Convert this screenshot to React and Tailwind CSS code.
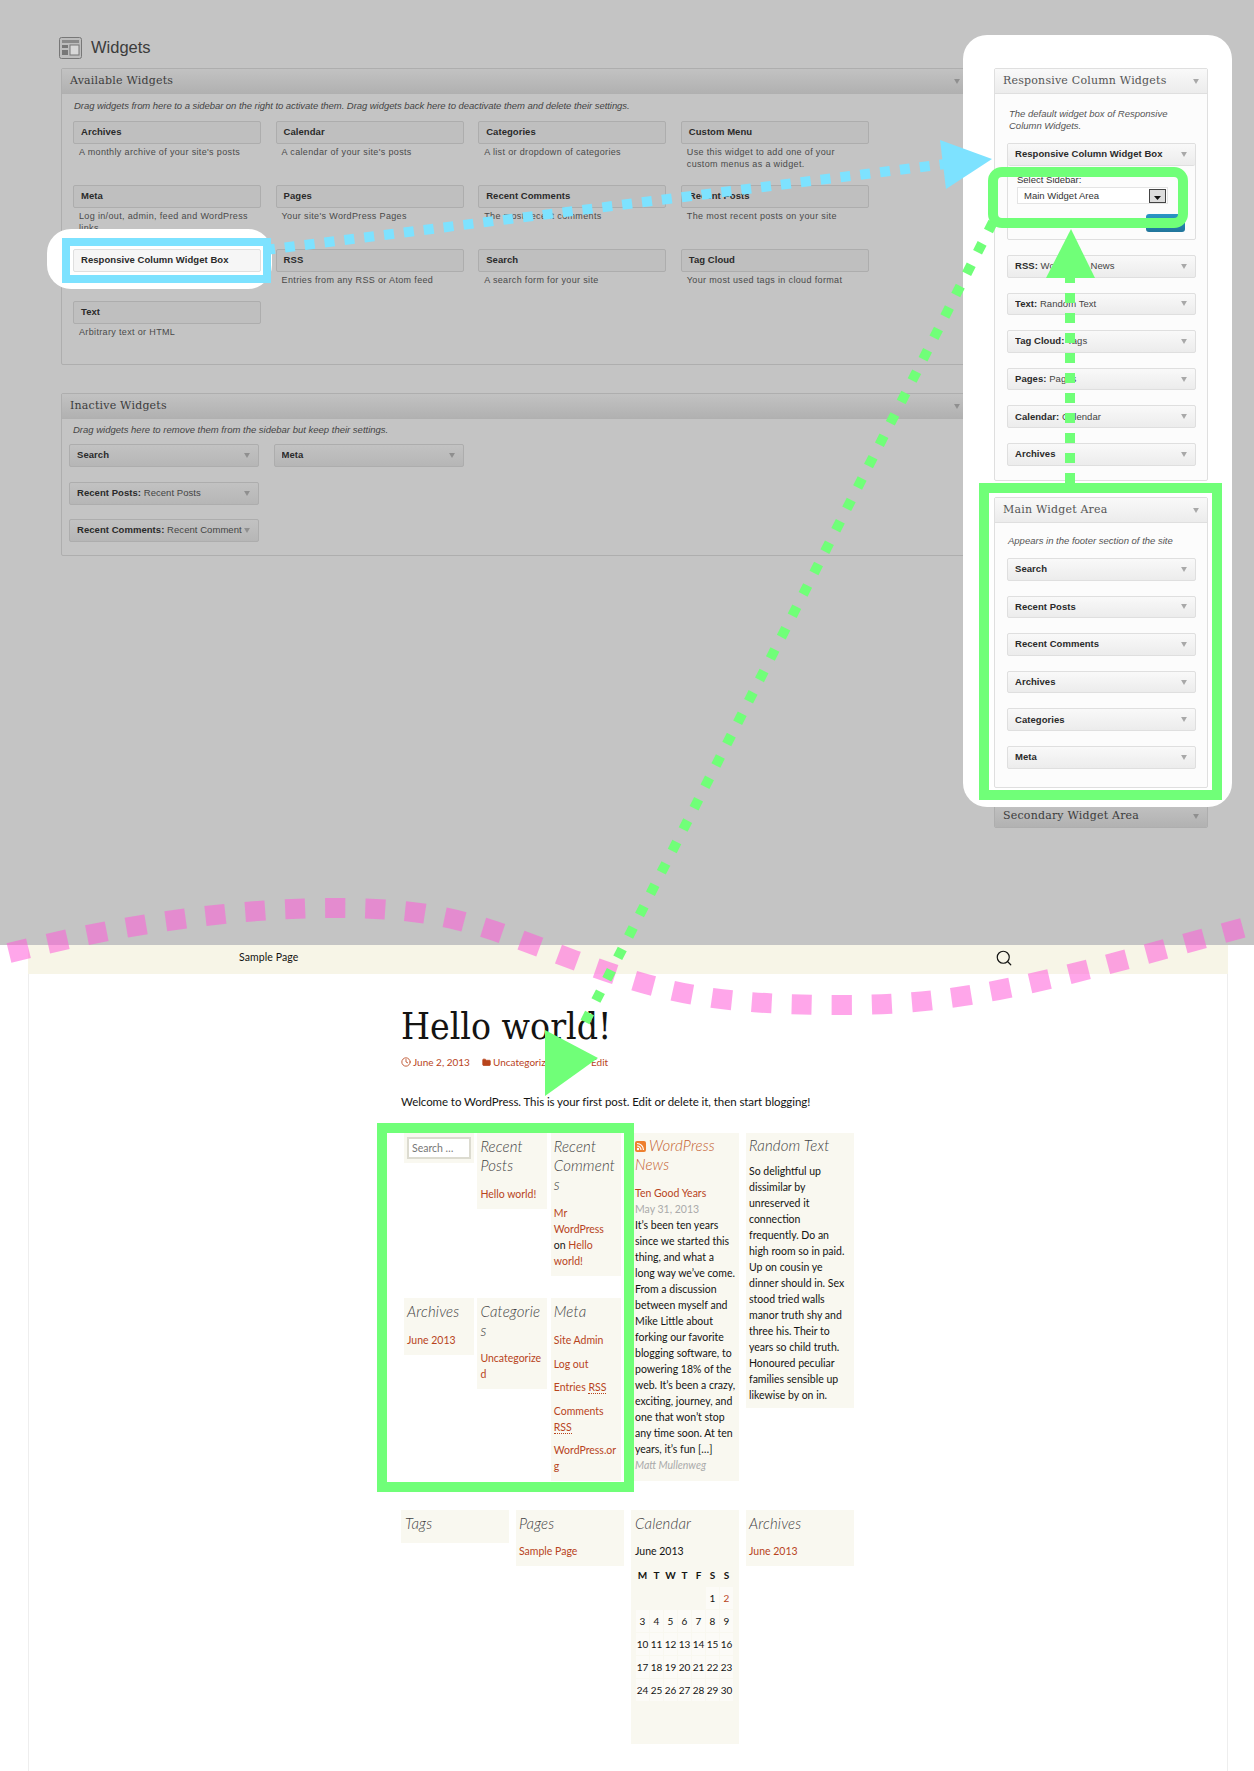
import React from 'react';
import { Clock, Folder, Search } from 'lucide-react';

const sans = "font-['Liberation_Sans',Arial,sans-serif]";
const serif = "font-['DejaVu_Serif',Georgia,serif]";
const blog = "font-['Lato','Noto_Sans',sans-serif]";

const available = [
    ['Archives', "A monthly archive of your site's posts"],
    ['Calendar', "A calendar of your site's posts"],
    ['Categories', 'A list or dropdown of categories'],
    ['Custom Menu', 'Use this widget to add one of your custom menus as a widget.'],
    ['Meta', 'Log in/out, admin, feed and WordPress links'],
    ['Pages', "Your site's WordPress Pages"],
    ['Recent Comments', 'The most recent comments'],
    ['Recent Posts', 'The most recent posts on your site'],
    ['Responsive Column Widget Box', ''],
    ['RSS', 'Entries from any RSS or Atom feed'],
    ['Search', 'A search form for your site'],
    ['Tag Cloud', 'Your most used tags in cloud format'],
    ['Text', 'Arbitrary text or HTML'],
];

const newsLines = [
    'It’s been ten years', 'since we started this', 'thing, and what a', 'long way we’ve come.',
    'From a discussion', 'between myself and', 'Mike Little about', 'forking our favorite',
    'blogging software, to', 'powering 18% of the', 'web. It’s been a crazy,', 'exciting, journey, and',
    'one that won’t stop', 'any time soon. At ten', 'years, it’s fun […]',
];

const randomLines = [
    'So delightful up', 'dissimilar by', 'unreserved it', 'connection', 'frequently. Do an',
    'high room so in paid.', 'Up on cousin ye', 'dinner should in. Sex', 'stood tried walls',
    'manor truth shy and', 'three his. Their to', 'years so child truth.', 'Honoured peculiar',
    'families sensible up', 'likewise by on in.',
];

const calendar = [
    ['', '', '', '', '', '1', '2'],
    ['3', '4', '5', '6', '7', '8', '9'],
    ['10', '11', '12', '13', '14', '15', '16'],
    ['17', '18', '19', '20', '21', '22', '23'],
    ['24', '25', '26', '27', '28', '29', '30'],
];

const Caret = ({ dim }) => (
    <svg width="6" height="5" viewBox="0 0 7 6" className="shrink-0">
        <path d="M0 0h7L3.5 6z" fill={dim ? '#8f8f8f' : '#a8a8a8'} />
    </svg>
);

const PanelHead = ({ title, dim }) => (
    <div className={`h-[25px] flex items-center justify-between pl-[8px] pr-[8px] border-b ${dim
        ? 'bg-gradient-to-b from-[#c2c2c2] to-[#b1b1b1] border-[#b0b0b0]'
        : 'bg-gradient-to-b from-[#f9f9f9] to-[#ececec] border-[#dfdfdf]'}`}>
        <span className={`${serif} text-[11px] tracking-[0.2px] ${dim ? 'text-[#3c3c3c]' : 'text-[#555]'}`}>{title}</span>
        <Caret dim={dim} />
    </div>
);

const Row = ({ name, sub, dim, className = '' }) => (
    <div className={`flex items-center justify-between pl-[7px] pr-[8px] border rounded-[2px] ${sans} text-[9.5px] tracking-[0.05px] ${dim
        ? 'bg-gradient-to-b from-[#c2c2c2] to-[#b6b6b6] border-[#adadad]'
        : 'bg-gradient-to-b from-[#f9f9f9] to-[#ececec] border-[#dfdfdf]'} ${className}`}>
        <span className="overflow-hidden whitespace-nowrap text-[#2a2a2a] w-[165px]">
            <b>{name}{sub ? ':' : ''}</b>{sub ? <span className="text-[#444]"> {sub}</span> : null}
        </span>
        <Caret dim={dim} />
    </div>
);

const WidgetTitle = ({ children }) => (
    <h3 className={`${blog} text-[15px] leading-[19px] italic font-light tracking-[0.15px] text-[#444] break-words`}>{children}</h3>
);

const Card = ({ children, className = '' }) => (
    <div className={`bg-[#f9f8f0] px-[3px] pt-[4px] pb-[7px] self-start overflow-hidden ${className}`}>{children}</div>
);

const Lnk = ({ children }) => <span className="text-[#b8441c]">{children}</span>;

const App = () => {
    return (
        <div className="relative w-[1254px] h-[1771px] bg-white overflow-hidden">
            {/* admin screenshot, dimmed */}
            <div className="flex h-[945px] bg-[#c4c4c4] pt-[37px] pl-[59px]">
                <div className="w-[910px]">
                    <div className="h-[22px] mb-[9px] flex items-center gap-[9px]">
                        <svg width="23" height="22" viewBox="0 0 23 22">
                            <rect x="0.5" y="0.5" width="22" height="21" rx="2" fill="#bdbdbd" stroke="#777" />
                            <rect x="3" y="3" width="17" height="3" fill="#8a8a8a" />
                            <rect x="3" y="8" width="6" height="3" fill="#777" />
                            <rect x="3" y="13" width="6" height="5" fill="#777" />
                            <rect x="11" y="8" width="9" height="10" fill="#d8d8d8" stroke="#777" />
                        </svg>
                        <span className={`${sans} text-[16.5px] leading-[20px] pb-[2px] text-[#3c3c3c]`}>Widgets</span>
                    </div>

                    <div className="ml-[2px] w-[908px] h-[297px] border border-[#aeaeae] rounded-[2px]">
                        <PanelHead title="Available Widgets" dim />
                        <p className={`${sans} italic text-[9.5px] leading-[12px] tracking-[-0.05px] text-[#444] pl-[12px] pt-[6px] h-[27px]`}>
                            Drag widgets from here to a sidebar on the right to activate them. Drag widgets back here to deactivate them and delete their settings.
                        </p>
                        <div className="grid grid-cols-[188px_188px_188px_188px] gap-x-[14.6px] auto-rows-[64px] pl-[11px]">
                            {available.map(([name, desc]) => {
                                const picked = name === 'Responsive Column Widget Box';
                                return (
                                    <div key={name} className={name === 'Text' ? '-mt-[12px]' : ''}>
                                        <div className={`relative h-[23px] flex items-center pl-[7px] border rounded-[2px] ${sans} text-[9.5px] tracking-[0.05px] font-bold text-[#2a2a2a] ${picked
                                            ? 'z-20 bg-[#f6f6f6] border-[#dfdfdf]'
                                            : 'bg-[#bfbfbf] border-[#adadad]'}`}>
                                            {name}
                                        </div>
                                        <p className={`${sans} text-[9px] leading-[12px] tracking-[0.35px] text-[#4a4a4a] pl-[6px] pr-[10px] pt-[2px]`}>{desc}</p>
                                    </div>
                                );
                            })}
                        </div>
                    </div>

                    <div className="ml-[2px] mt-[28px] w-[908px] h-[163px] border border-[#aeaeae] rounded-[2px]">
                        <PanelHead title="Inactive Widgets" dim />
                        <p className={`${sans} italic text-[9.5px] leading-[12px] text-[#444] pl-[11px] pt-[5px] h-[25px]`}>
                            Drag widgets here to remove them from the sidebar but keep their settings.
                        </p>
                        <div className="grid grid-cols-[190px_190px] gap-x-[14.5px] gap-y-[14.5px] pl-[7px]">
                            <Row name="Search" dim className="h-[23px]" />
                            <Row name="Meta" dim className="h-[23px]" />
                            <Row name="Recent Posts" sub="Recent Posts" dim className="h-[23px]" />
                            <div />
                            <Row name="Recent Comments" sub="Recent Comments" dim className="h-[23px]" />
                        </div>
                    </div>
                </div>

                <div className="ml-[25px] w-[214px] pt-[31px]">
                    <div className="relative z-20">
                        <div className="h-[413px] border border-[#dfdfdf] rounded-[2px] bg-[#fcfcfc]">
                            <PanelHead title="Responsive Column Widgets" />
                            <p className={`${sans} italic text-[9.5px] leading-[12px] text-[#555] pl-[14px] pr-[10px] pt-[14px]`}>
                                The default widget box of Responsive Column Widgets.
                            </p>
                            <div className="ml-[12px] mt-[11px] w-[189px] flex flex-col gap-[15px]">
                                <div className="h-[97px] border border-[#dfdfdf] rounded-[2px]">
                                    <Row name="Responsive Column Widget Box" className="h-[22px] border-0 border-b pl-[7px]" />
                                    <div className={`${sans} text-[9.5px] leading-[12px] text-[#333] pl-[9px] pt-[8px]`}>
                                        <div>Select Sidebar:</div>
                                        <div className="mt-[1px] w-[151px] h-[17px] flex items-center justify-between pl-[6px] pr-[1px] bg-white border border-[#e4e4e4]">
                                            <span>Main Widget Area</span>
                                            <span className="w-[17px] h-[14px] flex items-end justify-center pb-[2px] border border-[#444] bg-[#ddd]">
                                                <svg width="7" height="4" viewBox="0 0 7 4"><path d="M0 0h7L3.5 4z" fill="#111" /></svg>
                                            </span>
                                        </div>
                                        <div className="ml-[129px] mt-[10px] w-[39px] h-[18px] rounded-[3px] bg-gradient-to-b from-[#2a95c5] to-[#21759b]" />
                                    </div>
                                </div>
                                <Row name="RSS" sub="WordPress News" className="h-[22.6px]" />
                                <Row name="Text" sub="Random Text" className="h-[22.6px]" />
                                <Row name="Tag Cloud" sub="Tags" className="h-[22.6px]" />
                                <Row name="Pages" sub="Pages" className="h-[22.6px]" />
                                <Row name="Calendar" sub="Calendar" className="h-[22.6px]" />
                                <Row name="Archives" className="h-[22.6px]" />
                            </div>
                        </div>

                        <div className="mt-[16px] h-[291px] border border-[#dfdfdf] rounded-[2px] bg-[#fcfcfc]">
                            <PanelHead title="Main Widget Area" />
                            <p className={`${sans} italic text-[9.5px] leading-[12px] text-[#555] pl-[13px] pt-[12px]`}>
                                Appears in the footer section of the site
                            </p>
                            <div className="ml-[12px] mt-[11px] w-[189px] flex flex-col gap-[15px]">
                                {['Search', 'Recent Posts', 'Recent Comments', 'Archives', 'Categories', 'Meta'].map(n => (
                                    <Row key={n} name={n} className="h-[22.6px]" />
                                ))}
                            </div>
                        </div>
                    </div>
                    <div className="mt-[15px] h-[25px] border border-[#aeaeae] rounded-[2px] overflow-hidden">
                        <PanelHead title="Secondary Widget Area" dim />
                    </div>
                </div>
            </div>

            {/* the blog page below */}
            <div className="ml-[28px] w-[1200px] h-[826px] border-x border-[#eee]">
                <div className={`h-[29px] -mx-px bg-[#f7f5e7] flex items-center justify-between pl-[211px] pr-[215px] pb-[3px] ${blog} text-[10.5px] tracking-[0.1px] text-[#141412]`}>
                    <span>Sample Page</span>
                    <Search size={18} strokeWidth={1.6} color="#141412" />
                </div>

                <div className="pl-[372px] w-[826px]">
                    <h1 className="mt-[28px] h-[50px] font-['DejaVu_Serif_Condensed','Liberation_Serif',serif] text-[37px] leading-[50px] text-[#141412]">Hello world!</h1>
                    <div className={`mt-[3px] h-[14px] flex items-center ${blog} text-[10px] text-[#b8441c]`}>
                        <Clock size={10} className="mr-[2px]" />
                        <span className="w-[69px]">June 2, 2013</span>
                        <Folder size={9} fill="#b8441c" className="mr-[2px]" />
                        <span className="w-[98px]">Uncategorized</span>
                        <span>Edit</span>
                    </div>
                    <p className={`mt-[25px] h-[16px] ${blog} text-[11.5px] leading-[16px] tracking-[-0.07px] text-[#141412] whitespace-nowrap`}>
                        Welcome to WordPress. This is your first post. Edit or delete it, then start blogging!
                    </p>

                    <div className={`mt-[23px] grid grid-cols-[108px_108px_108px_108px] gap-x-[7px] items-start ${blog} text-[10.5px] leading-[16px] text-[#141412]`}>
                        <div className="col-span-2 pl-[3px] grid grid-cols-[70px_70px_70px] gap-x-[3.4px] gap-y-[22px] items-start">
                            <div className="bg-[#f9f8f0] h-[30px] px-[3px] pt-[4px]">
                                <div className="h-[22px] border-2 border-[#dcdbd0] bg-white pl-[3px] text-[#777] leading-[18px]">Search …</div>
                            </div>
                            <Card>
                                <WidgetTitle>Recent Posts</WidgetTitle>
                                <div className="mt-[11px]"><Lnk>Hello world!</Lnk></div>
                            </Card>
                            <Card>
                                <WidgetTitle>Recent Comments</WidgetTitle>
                                <div className="mt-[11px]"><Lnk>Mr<br />WordPress</Lnk><br />on <Lnk>Hello<br />world!</Lnk></div>
                            </Card>
                            <Card>
                                <WidgetTitle>Archives</WidgetTitle>
                                <div className="mt-[11px]"><Lnk>June 2013</Lnk></div>
                            </Card>
                            <Card>
                                <WidgetTitle>Categories</WidgetTitle>
                                <div className="mt-[10px]"><Lnk>Uncategorize<br />d</Lnk></div>
                            </Card>
                            <Card className="pb-0">
                                <WidgetTitle>Meta</WidgetTitle>
                                <ul className="mt-[11px] flex flex-col gap-[7.5px] break-words">
                                    <li><Lnk>Site Admin</Lnk></li>
                                    <li><Lnk>Log out</Lnk></li>
                                    <li><Lnk>Entries <span className="border-b border-dotted border-[#b8441c]">RSS</span></Lnk></li>
                                    <li><Lnk>Comments<br /><span className="border-b border-dotted border-[#b8441c]">RSS</span></Lnk></li>
                                    <li><Lnk>WordPress.or<br />g</Lnk></li>
                                </ul>
                            </Card>
                        </div>

                        <div className="h-[348px] bg-[#f9f8f0] pl-[3px] pt-[3px] whitespace-nowrap overflow-hidden">
                            <h3 className="text-[15px] leading-[19px] italic font-light tracking-[0.15px] text-[#c4602f] pl-[1px]">
                                <svg width="11" height="11" viewBox="0 0 11 11" className="inline-block mr-[3px] align-[-1px]">
                                    <rect width="11" height="11" rx="2" fill="#ee802f" />
                                    <circle cx="3" cy="8" r="1.2" fill="#fff" />
                                    <path d="M2 5a4 4 0 0 1 4 4M2 2.500a6.500 6.500 0 0 1 6.500 6.500" fill="none" stroke="#fff" strokeWidth="1.200" />
                                </svg>
                                WordPress<br />News
                            </h3>
                            <div className="mt-[11px] pl-[1px]">
                                <Lnk>Ten Good Years</Lnk>
                                <div className="text-[#aaa]">May 31, 2013</div>
                                {newsLines.map(l => <div key={l}>{l}</div>)}
                                <div className="italic text-[#aaa]">Matt Mullenweg</div>
                            </div>
                        </div>

                        <div className="bg-[#f9f8f0] pl-[3px] pt-[3px] pb-[5px] whitespace-nowrap">
                            <WidgetTitle>Random Text</WidgetTitle>
                            <div className="mt-[8px]">
                                {randomLines.map(l => <div key={l}>{l}</div>)}
                            </div>
                        </div>
                    </div>

                    <div className={`mt-[29px] grid grid-cols-[108px_108px_108px_108px] gap-x-[7px] items-start ${blog} text-[10.5px] leading-[16px] text-[#141412]`}>
                        <div className="h-[33px] bg-[#f9f8f0] pl-[4px] pt-[4px]"><WidgetTitle>Tags</WidgetTitle></div>
                        <div className="h-[56px] bg-[#f9f8f0] pl-[3px] pt-[4px]">
                            <WidgetTitle>Pages</WidgetTitle>
                            <div className="mt-[10px]"><Lnk>Sample Page</Lnk></div>
                        </div>
                        <div className="h-[234px] bg-[#f9f8f0] px-[4px] pt-[4px]">
                            <WidgetTitle>Calendar</WidgetTitle>
                            <div className="mt-[10px]">June 2013</div>
                            <table className="mt-[3px] border-separate border-spacing-[1px] text-center text-[10px]">
                                <thead>
                                    <tr>{['M', 'T', 'W', 'T', 'F', 'S', 'S'].map((d, i) => <th key={i} className="w-[13px] h-[23px] p-0 font-bold">{d}</th>)}</tr>
                                </thead>
                                <tbody>
                                    {calendar.map((week, i) => (
                                        <tr key={i}>
                                            {week.map((d, j) => (
                                                <td key={j} className={`w-[13px] h-[22px] p-0 ${d ? 'bg-[#fcfbf7]' : ''} ${d === '2' ? 'text-[#b8441c]' : ''}`}>{d}</td>
                                            ))}
                                        </tr>
                                    ))}
                                </tbody>
                            </table>
                        </div>
                        <div className="h-[56px] bg-[#f9f8f0] pl-[3px] pt-[4px]">
                            <WidgetTitle>Archives</WidgetTitle>
                            <div className="mt-[10px]"><Lnk>June 2013</Lnk></div>
                        </div>
                    </div>
                </div>
            </div>

            {/* annotation highlights */}
            <div className="absolute z-10 left-[47px] top-[229px] w-[225px] h-[60px] bg-white rounded-[24px]" />
            <div className="absolute z-10 left-[963px] top-[35px] w-[269px] h-[772px] bg-white rounded-[24px]" />
            <div className="absolute z-30 left-[62px] top-[238px] w-[209px] h-[45px] border-[8px] border-[#7de2ff]" />
            <div className="absolute z-30 left-[988px] top-[167px] w-[200px] h-[61px] border-[10px] border-[#70ff78] rounded-[14px]" />
            <div className="absolute z-30 left-[979px] top-[483px] w-[243px] h-[317px] border-[10px] border-[#70ff78]" />
            <div className="absolute z-30 left-[377px] top-[1123px] w-[257px] h-[369px] border-[10px] border-[#70ff78]" />

            <svg className="absolute z-30 left-0 top-0 pointer-events-none" width="1254" height="1771" viewBox="0 0 1254 1771" fill="none">
                <path d="M9 953C120 925 230 908 337 908S480 925 574 960 720 1005 845 1005 1050 980 1250 926" stroke="#ff5ad8" strokeOpacity="0.54" strokeWidth="20" strokeDasharray="20 20" />
                <path d="M265 250L945 164" stroke="#7de2ff" strokeWidth="10" strokeDasharray="10 10" />
                <path d="M940 140L992 159 946 189Z" fill="#7de2ff" />
                <path d="M993 222L585 1022" stroke="#70ff78" strokeWidth="10" strokeDasharray="10 14" />
                <path d="M545 1030L598 1058 545 1096Z" fill="#70ff78" />
                <path d="M1070 483V278" stroke="#70ff78" strokeWidth="10" strokeDasharray="10 10" />
                <path d="M1046 278L1071 229 1095 278Z" fill="#70ff78" />
            </svg>
        </div>
    );
};

export default App;
